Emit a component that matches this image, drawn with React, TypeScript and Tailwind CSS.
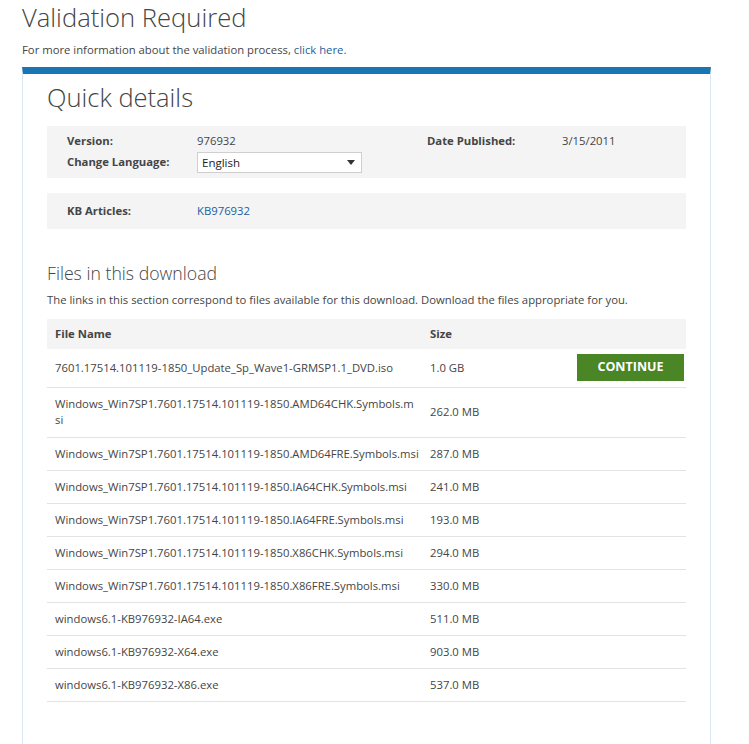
import React from 'react';

interface FileRow {
    name: string;
    tail?: string; // wrapped part of a long name
    size: string;
}

const files: FileRow[] = [
    { name: '7601.17514.101119-1850_Update_Sp_Wave1-GRMSP1.1_DVD.iso', size: '1.0 GB' },
    { name: 'Windows_Win7SP1.7601.17514.101119-1850.AMD64CHK.Symbols.m', tail: 'si', size: '262.0 MB' },
    { name: 'Windows_Win7SP1.7601.17514.101119-1850.AMD64FRE.Symbols.msi', size: '287.0 MB' },
    { name: 'Windows_Win7SP1.7601.17514.101119-1850.IA64CHK.Symbols.msi', size: '241.0 MB' },
    { name: 'Windows_Win7SP1.7601.17514.101119-1850.IA64FRE.Symbols.msi', size: '193.0 MB' },
    { name: 'Windows_Win7SP1.7601.17514.101119-1850.X86CHK.Symbols.msi', size: '294.0 MB' },
    { name: 'Windows_Win7SP1.7601.17514.101119-1850.X86FRE.Symbols.msi', size: '330.0 MB' },
    { name: 'windows6.1-KB976932-IA64.exe', size: '511.0 MB' },
    { name: 'windows6.1-KB976932-X64.exe', size: '903.0 MB' },
    { name: 'windows6.1-KB976932-X86.exe', size: '537.0 MB' },
];

const App = () => {
    return (
        <div className="min-h-screen bg-white px-[22px] text-[#454545] font-['Open_Sans',sans-serif] overflow-hidden">
            {/* Header */}
            <h1 className="pt-[1px] text-[25.6px] leading-[34px] font-light">Validation Required</h1>
            <p className="mt-[7px] text-[11.3px] leading-[16px]">
                For more information about the validation process,{' '}
                <a href="#" className="text-[#1b5f9c]">click here.</a>
            </p>

            {/* Panel */}
            <div className="mt-[9px] w-[689px] border-t-[7px] border-t-[#1a75b4] border-x border-x-[#d7e7f3] px-[24px] pb-[60px]">
                <h2 className="pt-[7px] text-[25.5px] leading-[32px] font-light">Quick details</h2>

                <div className="mt-[13px] bg-[#f4f4f4] px-[20px] pt-[5px] pb-[5px] text-[11.3px]">
                    <div className="flex h-[20px] items-center">
                        <span className="w-[130px] font-bold">Version:</span>
                        <span className="w-[230px]">976932</span>
                        <span className="w-[135px] font-bold">Date Published:</span>
                        <span>3/15/2011</span>
                    </div>
                    <div className="mt-[1px] flex items-center">
                        <span className="w-[130px] font-bold">Change Language:</span>
                        <div className="flex h-[21px] w-[165px] items-center justify-between border border-[#cfcfcf] bg-white pl-[4px] pr-[6px] text-[11.5px] text-[#222]">
                            <span>English</span>
                            <svg width="8" height="5" viewBox="0 0 8 5">
                                <path d="M0 0 H8 L4 5 Z" fill="#333" />
                            </svg>
                        </div>
                    </div>
                </div>

                <div className="mt-[15px] flex bg-[#f4f4f4] px-[20px] py-[8px] text-[11.3px] leading-[20px]">
                    <span className="w-[130px] font-bold">KB Articles:</span>
                    <a href="#" className="text-[#1b5f9c]">KB976932</a>
                </div>

                {/* Files */}
                <h3 className="mt-[32px] text-[17.7px] leading-[24px] font-light">Files in this download</h3>
                <p className="mt-[7px] text-[11.3px] leading-[16px]">
                    The links in this section correspond to files available for this download. Download the files appropriate for you.
                </p>

                <table className="mt-[11px] w-full table-fixed border-collapse text-left text-[11.3px]">
                    <colgroup>
                        <col className="w-[375px]" />
                        <col className="w-[150px]" />
                        <col />
                    </colgroup>
                    <thead>
                        <tr className="bg-[#f4f4f4] h-[30px]">
                            <th className="px-[8px] font-bold">File Name</th>
                            <th className="px-[8px] font-bold">Size</th>
                            <th></th>
                        </tr>
                    </thead>
                    <tbody>
                        {files.map((file, i) => (
                            <tr key={file.name} className={i === 0 ? 'h-[38px] border-b border-[#e3e3e3]' : 'border-b border-[#e3e3e3]'}>
                                <td className={file.tail ? 'px-[8px] py-[8px] leading-[16.5px] whitespace-nowrap align-middle' : 'px-[8px] py-[8px] leading-[16px] whitespace-nowrap align-middle'}>
                                    {file.name}
                                    {file.tail && (
                                        <>
                                            <br />
                                            {file.tail}
                                        </>
                                    )}
                                </td>
                                <td className="px-[8px] py-[8px] leading-[16px] align-middle whitespace-nowrap">{file.size}</td>
                                <td className="py-[5px] pr-[2px] text-right align-middle">
                                    {i === 0 && (
                                        <button className="h-[27px] w-[107px] bg-[#4a8526] text-[12.5px] font-bold text-white">
                                            CONTINUE
                                        </button>
                                    )}
                                </td>
                            </tr>
                        ))}
                    </tbody>
                </table>
            </div>
        </div>
    );
};

export default App;
